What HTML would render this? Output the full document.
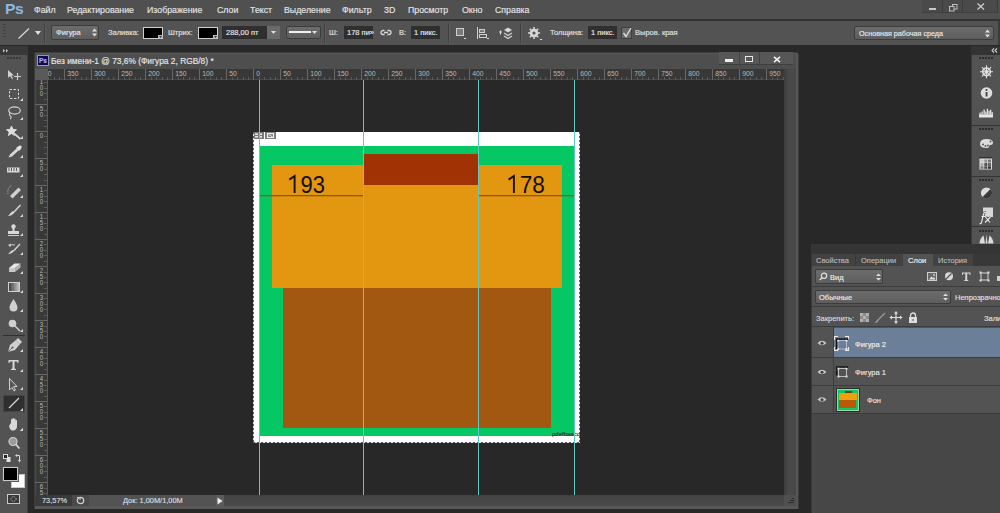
<!DOCTYPE html>
<html><head><meta charset="utf-8">
<style>
*{margin:0;padding:0;box-sizing:border-box}
html,body{width:1000px;height:513px;overflow:hidden;background:#282828;font-family:"Liberation Sans",sans-serif;position:relative}
.a{position:absolute}
svg.a{overflow:visible}
.t{position:absolute;white-space:nowrap;color:#dcdcdc;font-size:8.6px;line-height:10px;-webkit-text-stroke:0.15px currentColor}
.m{top:5px;color:#e4e4e4;font-size:8.8px}
.o{font-size:7.5px;line-height:9px;color:#e2e2e2}
.box{background:linear-gradient(#6c6c6c,#5e5e5e);border:1px solid #3c3c3c;border-radius:2px}
.sw{background:#000;border:1px solid #d0d0d0}
</style></head><body>
<!-- ===== MENU BAR ===== -->
<div class="a" style="left:0;top:0;width:1000px;height:20px;background:#505050"></div>
<div class="a" style="left:0;top:19px;width:1000px;height:2px;background:#323232"></div>
<div class="t" style="left:5px;top:1px;font-size:15.5px;line-height:16px;font-weight:bold;color:#94b6dc;letter-spacing:-0.3px;text-shadow:0 0 1px #24405e">Ps</div>
<div class="t m" style="left:34px">Файл</div>
<div class="t m" style="left:67px">Редактирование</div>
<div class="t m" style="left:147px">Изображение</div>
<div class="t m" style="left:217px">Слои</div>
<div class="t m" style="left:250px">Текст</div>
<div class="t m" style="left:284px">Выделение</div>
<div class="t m" style="left:342px">Фильтр</div>
<div class="t m" style="left:384px">3D</div>
<div class="t m" style="left:408px">Просмотр</div>
<div class="t m" style="left:462px">Окно</div>
<div class="t m" style="left:495px">Справка</div>
<!-- window buttons -->
<div class="a" style="left:922px;top:0;width:76px;height:13px;background:#4a4a4a;border-bottom:1px solid #404040"></div>
<div class="a" style="left:942px;top:0;width:1px;height:13px;background:#3c3c3c"></div>
<div class="a" style="left:962px;top:0;width:1px;height:13px;background:#3c3c3c"></div>
<div class="a" style="left:997px;top:0;width:1px;height:13px;background:#3c3c3c"></div>
<div class="a" style="left:929px;top:8px;width:7px;height:2px;background:#c8c8c8"></div>
<svg class="a" style="left:949px;top:4px" width="9" height="8"><rect x="3.5" y="0.5" width="4.5" height="4.5" fill="none" stroke="#c0c0c0"/><rect x="0.5" y="2.5" width="4.5" height="4.5" fill="#4a4a4a" stroke="#c0c0c0"/></svg>
<svg class="a" style="left:977px;top:3px" width="8" height="7"><path d="M0.5 0.5L7 6.5M7 0.5L0.5 6.5" stroke="#c8c8c8" stroke-width="1.4"/></svg>

<!-- ===== OPTIONS BAR ===== -->
<div class="a" style="left:0;top:21px;width:1000px;height:24px;background:#535353"></div>
<div class="a" style="left:998px;top:21px;width:2px;height:24px;background:#3c3c3c"></div>
<svg class="a" style="left:3px;top:24px" width="4" height="16"><g fill="#404040"><rect x="0" y="0" width="3" height="1"/><rect x="0" y="3" width="3" height="1"/><rect x="0" y="6" width="3" height="1"/><rect x="0" y="9" width="3" height="1"/><rect x="0" y="12" width="3" height="1"/></g></svg>
<svg class="a" style="left:17px;top:27px" width="14" height="13"><path d="M1.5 11.5L12 1.5" stroke="#d6d6d6" stroke-width="1.3"/></svg>
<svg class="a" style="left:35px;top:31px" width="7" height="5"><path d="M0 0H6L3 4z" fill="#e0e0e0"/></svg>
<div class="a" style="left:44px;top:23px;width:1px;height:20px;background:#404040"></div>
<div class="a" style="left:45px;top:23px;width:1px;height:20px;background:#5d5d5d"></div>
<div class="a box" style="left:51px;top:25px;width:48px;height:15px"></div>
<div class="t o" style="left:56px;top:28px;color:#e8e8e8">Фигура</div>
<svg class="a" style="left:92px;top:28px" width="6" height="9"><path d="M0 3.5L2.5 0.5L5 3.5zM0 5.5L2.5 8.5L5 5.5z" fill="#e0e0e0"/></svg>
<div class="t o" style="left:108px;top:28px">Заливка:</div>
<div class="a sw" style="left:143px;top:27px;width:20px;height:12px"></div>
<svg class="a" style="left:158px;top:35px" width="5" height="4"><path d="M0 0h5v4h-5z" fill="#bfbfbf"/><path d="M1 1h3l-1.5 2z" fill="#333"/></svg>
<div class="t o" style="left:168px;top:28px">Штрих:</div>
<div class="a sw" style="left:198px;top:27px;width:20px;height:12px"></div>
<svg class="a" style="left:213px;top:35px" width="5" height="4"><path d="M0 0h5v4h-5z" fill="#bfbfbf"/><path d="M1 1h3l-1.5 2z" fill="#333"/></svg>
<div class="a" style="left:222px;top:26px;width:45px;height:13px;background:#2f2f2f"></div>
<div class="t o" style="left:226px;top:28px;color:#e6e6e6">288,00 пт</div>
<div class="a" style="left:267px;top:26px;width:13px;height:13px;background:#6a6a6a"></div>
<svg class="a" style="left:271px;top:31px" width="6" height="4"><path d="M0 0H5L2.5 3z" fill="#e0e0e0"/></svg>
<div class="a box" style="left:286px;top:26px;width:35px;height:13px"></div>
<div class="a" style="left:289px;top:31px;width:22px;height:2px;background:#f0f0f0"></div>
<svg class="a" style="left:312px;top:31px" width="6" height="4"><path d="M0 0H5L2.5 3z" fill="#e0e0e0"/></svg>
<div class="a" style="left:324px;top:23px;width:1px;height:20px;background:#404040"></div>
<div class="a" style="left:325px;top:23px;width:1px;height:20px;background:#5d5d5d"></div>
<div class="t o" style="left:329px;top:28px">Ш:</div>
<div class="a" style="left:344px;top:26px;width:29px;height:13px;background:#2f2f2f"></div>
<div class="t o" style="left:347px;top:28px;color:#e6e6e6">178 пи»</div>
<svg class="a" style="left:380px;top:29px" width="12" height="7"><path d="M4.5 1.5H3A2 2 0 0 0 3 5.5H4.5M7.5 1.5H9A2 2 0 0 1 9 5.5H7.5M4 3.5H8" fill="none" stroke="#d8d8d8" stroke-width="1.3"/></svg>
<div class="t o" style="left:399px;top:28px">В:</div>
<div class="a" style="left:411px;top:26px;width:29px;height:13px;background:#2f2f2f"></div>
<div class="t o" style="left:414px;top:28px;color:#e6e6e6">1 пикс.</div>
<div class="a" style="left:448px;top:23px;width:1px;height:20px;background:#404040"></div>
<div class="a" style="left:449px;top:23px;width:1px;height:20px;background:#5d5d5d"></div>
<svg class="a" style="left:455px;top:27px" width="11" height="13"><rect x="1.5" y="1.5" width="7" height="7" fill="#7a7a7a" stroke="#cfcfcf"/><rect x="9" y="11" width="2" height="1" fill="#ddd"/></svg>
<svg class="a" style="left:476px;top:27px" width="13" height="13"><rect x="1" y="0" width="1" height="12" fill="#d0d0d0"/><rect x="3.5" y="2.5" width="5" height="3" fill="#777" stroke="#d0d0d0"/><rect x="3.5" y="7.5" width="7" height="3" fill="#555" stroke="#d0d0d0"/><rect x="11" y="11" width="2" height="1" fill="#ddd"/></svg>
<svg class="a" style="left:498px;top:26px" width="15" height="14"><path d="M1 6h3M2.5 4.5v4" stroke="#ddd" stroke-width="1"/><path d="M6 4L10 1.5L14 4L10 6.5z" fill="#d8d8d8"/><path d="M6 7L10 9.5L14 7M6 10L10 12.5L14 10" fill="none" stroke="#d0d0d0" stroke-width="1.3"/></svg>
<div class="a" style="left:520px;top:23px;width:1px;height:20px;background:#404040"></div>
<div class="a" style="left:521px;top:23px;width:1px;height:20px;background:#5d5d5d"></div>
<svg class="a" style="left:528px;top:27px" width="14" height="13"><circle cx="6" cy="6" r="4.3" fill="#d8d8d8"/><g stroke="#d8d8d8" stroke-width="1.6"><path d="M6 0v12M0 6h12M1.8 1.8l8.4 8.4M10.2 1.8l-8.4 8.4"/></g><circle cx="6" cy="6" r="1.6" fill="#555"/><rect x="12" y="12" width="2" height="1" fill="#ddd"/></svg>
<div class="t o" style="left:550px;top:28px">Толщина:</div>
<div class="a" style="left:588px;top:26px;width:29px;height:13px;background:#2f2f2f"></div>
<div class="t o" style="left:591px;top:28px;color:#e6e6e6">1 пикс.</div>
<div class="a" style="left:621px;top:27px;width:11px;height:12px;background:#6a6a6a;border:1px solid #3e3e3e"></div>
<svg class="a" style="left:621px;top:27px" width="11" height="12"><path d="M2.5 6L5 9.5L10 1" fill="none" stroke="#e0e0e0" stroke-width="1.3"/></svg>
<div class="t o" style="left:635px;top:28px">Выров. края</div>
<div class="a box" style="left:854px;top:26px;width:140px;height:14px"></div>
<div class="t o" style="left:859px;top:29px;color:#e8e8e8;font-size:7.2px">Основная рабочая среда</div>
<svg class="a" style="left:985px;top:29px" width="6" height="9"><path d="M0 3.5L2.5 0.5L5 3.5zM0 5.5L2.5 8.5L5 5.5z" fill="#e0e0e0"/></svg>
<!-- ===== LEFT TOOLS ===== -->
<div class="a" style="left:0;top:46px;width:28px;height:467px;background:#535353"></div>
<div class="a" style="left:27px;top:46px;width:1px;height:467px;background:#3e3e3e"></div>
<div class="a" style="left:0;top:46px;width:28px;height:9px;background:#383838"></div>
<svg class="a" style="left:3px;top:49px" width="7" height="4"><path d="M0 0L2 1.75L0 3.5zM3 0L5 1.75L3 3.5z" fill="#d0d0d0"/></svg>
<svg class="a" style="left:7px;top:57px" width="15" height="2"><g fill="#383838"><rect x="0" y="0" width="2" height="2"/><rect x="3" y="0" width="2" height="2"/><rect x="6" y="0" width="2" height="2"/><rect x="9" y="0" width="2" height="2"/><rect x="12" y="0" width="2" height="2"/></g></svg>
<svg class="a" style="left:0;top:60px" width="28" height="453" fill="#cfcfcf" stroke="none">
<!-- tiny triangles -->
<g fill="#d8d8d8">
<path d="M20 41h3v-3z"/><path d="M20 60h3v-3z"/><path d="M20 79h3v-3z"/><path d="M20 98h3v-3z"/><path d="M20 117h3v-3z"/><path d="M20 138h3v-3z"/><path d="M20 157h3v-3z"/><path d="M20 176h3v-3z"/><path d="M20 195h3v-3z"/><path d="M20 214h3v-3z"/><path d="M20 233h3v-3z"/><path d="M20 252h3v-3z"/><path d="M20 272h3v-3z"/><path d="M20 292h3v-3z"/><path d="M20 312h3v-3z"/><path d="M20 330h3v-3z"/><path d="M20 349h3v-3z"/><path d="M20 371h3v-3z"/>
</g>
<!-- move y70-80 -->
<path d="M8 10L8 18L10 16L12 19L13 18.5L11.5 15.5L14 15.5z" fill="#d0d0d0"/>
<path d="M17.5 13V20M14 16.5H21" stroke="#d0d0d0" stroke-width="1.2"/>
<!-- marquee -->
<rect x="9.5" y="29.5" width="9" height="9" fill="none" stroke="#d8d8d8" stroke-dasharray="2.5 1.5"/>
<!-- lasso -->
<ellipse cx="14.5" cy="50.5" rx="5.8" ry="3.6" fill="none" stroke="#d4d4d4" stroke-width="1.2"/>
<path d="M10 53Q8.5 55 10.5 56Q12 57.5 10 59" fill="none" stroke="#d4d4d4" stroke-width="1.1"/>
<!-- magic wand -->
<path d="M11.5 67L12.6 69.6L15.5 70L13.3 71.8L14 74.6L11.5 73L9 74.6L9.7 71.8L7.5 70L10.4 69.6z" fill="#e0e0e0" stroke="#d8d8d8" stroke-width="0.8" transform="translate(11.5 71) scale(1.25) translate(-11.5 -71)"/>
<path d="M13.5 73L20.5 79" stroke="#d0d0d0" stroke-width="1.8"/>
<!-- eyedropper -->
<path d="M8.5 97.5L10 94.5L16.5 88.5L18.5 90.5L12 96.5z" fill="#d8d8d8"/>
<path d="M16 88L19 85.8Q21 85 21.5 86.5Q22 88 20.5 89.5L18.8 91z" fill="#e4e4e4"/>
<!-- ruler -->
<rect x="7" y="107.5" width="12.5" height="5" fill="#d8d8d8"/>
<path d="M9 111v-3M11.5 111v-3M14 111v-3M16.5 111v-3" stroke="#555" stroke-width="0.9"/>
<!-- healing -->
<path d="M10 136L18.5 127.5L21 130L12.5 138.5z" fill="#d0d0d0"/>
<path d="M8 134Q7 128 12 125" fill="none" stroke="#b8b8b8" stroke-width="1" stroke-dasharray="1 1"/>
<!-- brush -->
<path d="M20.5 145L14 152" stroke="#d0d0d0" stroke-width="1.6"/>
<path d="M8 156Q11 156 13 154L14.5 152.5L13 151Q10.5 153 8 156z" fill="#e0e0e0"/>
<!-- stamp -->
<circle cx="13.5" cy="166.5" r="2.2" fill="#d8d8d8"/><rect x="12.5" y="167" width="2" height="4" fill="#d8d8d8"/>
<rect x="8" y="171" width="11" height="3" fill="#d8d8d8"/><rect x="8" y="175" width="11" height="1" fill="#cfcfcf"/>
<!-- history brush -->
<path d="M20 184L13.5 191" stroke="#d0d0d0" stroke-width="1.5"/>
<path d="M8 194Q11 194 13 192L14 191L12.5 190Q10 192 8 194z" fill="#e0e0e0"/>
<path d="M9 186Q11 184 15 185" fill="none" stroke="#d0d0d0" stroke-width="1"/><path d="M8 185L11 183.5L10.5 187z" fill="#d0d0d0"/>
<!-- eraser -->
<path d="M9 208L14.5 203.5H20.5L15 208z" fill="#e8e8e8"/><path d="M9 208H15V212H9z" fill="#c8c8c8"/><path d="M15 208L20.5 203.5V207.5L15 212z" fill="#b0b0b0"/>
<!-- gradient -->
<defs><linearGradient id="gr" x1="0" x2="1"><stop offset="0" stop-color="#3a3a3a"/><stop offset="1" stop-color="#c8c8c8"/></linearGradient></defs>
<rect x="8.5" y="222.5" width="11" height="9" fill="url(#gr)" stroke="#d0d0d0"/>
<!-- blur drop -->
<path d="M13.5 239Q17.5 245 17.5 247.5A4 4 0 0 1 9.5 247.5Q9.5 245 13.5 239z" fill="#d0d0d0"/>
<!-- dodge -->
<circle cx="12.5" cy="263.5" r="3.8" fill="#d0d0d0"/><path d="M15 266L20 271" stroke="#d0d0d0" stroke-width="1.5"/>
<!-- separator -->
<rect x="3" y="275" width="22" height="1" fill="#303030"/>
<!-- pen -->
<path d="M8 292L10 285L16 280L20 284L15 290z" fill="#d0d0d0"/><path d="M16 280L18 278L22 282L20 284z" fill="#d8d8d8"/><circle cx="12.5" cy="287.5" r="1" fill="#555"/><path d="M8 292L12 288" stroke="#555" stroke-width="0.8"/>
<!-- T -->
<path d="M8.5 300H18.5V303H17.5L17 301.5H14.5V308.5L16 309V310H11V309L12.5 308.5V301.5H10L9.5 303H8.5z" fill="#d8d8d8"/>
</svg>
<!-- selected tool bg -->
<div class="a" style="left:3px;top:395px;width:22px;height:17px;background:#2f2f2f;border:1px solid #454545"></div>
<svg class="a" style="left:0;top:360px" width="28" height="153">
<!-- path select -->
<path d="M9.5 18.5V30L12 27.5L14 31L15.5 30L13.5 26.5H17z" fill="#555" stroke="#d0d0d0" stroke-width="1"/>
<!-- line -->
<path d="M9 48L19 38" stroke="#d8d8d8" stroke-width="1.3"/>
<path d="M20 51h3v-3z" fill="#d8d8d8"/>
<!-- hand -->
<path d="M9 66L11 63V59.5A0.8 0.8 0 0 1 12.5 59.5V64V58.5A0.8 0.8 0 0 1 14 58.5V64V59A0.8 0.8 0 0 1 15.5 59V64.5V60.5A0.8 0.8 0 0 1 17 60.5V66Q17 69.5 14 70.5H12Q10 70 9 66z" fill="#d8d8d8"/>
<path d="M20 71h3v-3z" fill="#d8d8d8"/>
<!-- zoom -->
<circle cx="13" cy="81.5" r="4" fill="#9a9a9a" stroke="#d0d0d0" stroke-width="1.2"/><path d="M15.8 84.3L19.5 88.5" stroke="#d0d0d0" stroke-width="1.8"/>
<!-- default colors -->
<rect x="6.5" y="97" width="4" height="5" fill="#e0e0e0"/><rect x="3.5" y="94.5" width="4" height="4" fill="#222" stroke="#d8d8d8" stroke-width="1"/>
<path d="M16.5 95.5H19.5V100.5" fill="none" stroke="#d8d8d8" stroke-width="1"/><path d="M15 95.5L17 94V97z M18 100L21 100L19.5 102.5z" fill="#d8d8d8"/>
</svg>
<div class="a" style="left:11px;top:474px;width:14px;height:14px;background:#fff;border:1px solid #c8c8c8"></div>
<div class="a" style="left:3px;top:467px;width:15px;height:14px;background:#000;border:1px solid #c8c8c8;box-shadow:0 0 0 1px #5a5a5a"></div>
<div class="a" style="left:7px;top:494px;width:13px;height:10px;background:#3a3a3a;border:1px solid #c8c8c8"></div>
<svg class="a" style="left:10px;top:496px" width="8" height="6"><ellipse cx="3.5" cy="3" rx="2.6" ry="2.3" fill="none" stroke="#bdbdbd" stroke-dasharray="1 1"/></svg>
<!-- ===== DOCUMENT WINDOW ===== -->
<div class="a" style="left:34px;top:52px;width:765px;height:457px;background:#4e4e4e;border-radius:3px 3px 0 0;border:1px solid #3c3c3c"></div>
<div class="a" style="left:35px;top:53px;width:763px;height:16px;background:#4e4e4e;border-radius:2px 2px 0 0"></div>
<div class="a" style="left:35px;top:53px;width:763px;height:1px;background:#575757"></div>
<!-- ps icon -->
<div class="a" style="left:37px;top:55px;width:12px;height:11px;background:#0a0a55;border:1px solid #8b9ac8"></div>
<div class="t" style="left:39px;top:57px;font-size:6.5px;line-height:7px;color:#a8b4ff;font-weight:bold">Ps</div>
<div class="t" style="left:51px;top:56px;font-size:8.4px;color:#e6e6e6">Без имени-1 @ 73,6% (Фигура 2, RGB/8) *</div>
<!-- window buttons -->
<div class="a" style="left:719px;top:52px;width:74px;height:13px;background:#575757;border-bottom:1px solid #3e3e3e"></div>
<div class="a" style="left:739px;top:52px;width:1px;height:13px;background:#424242"></div>
<div class="a" style="left:759px;top:52px;width:1px;height:13px;background:#424242"></div>
<div class="a" style="left:725px;top:59px;width:8px;height:3px;background:#f0f0f0"></div>
<div class="a" style="left:745px;top:56px;width:8px;height:6px;border:1.5px solid #eaeaea"></div>
<svg class="a" style="left:773px;top:56px" width="8" height="7"><path d="M1 0.8L7 6.2M7 0.8L1 6.2" stroke="#f0f0f0" stroke-width="1.6"/></svg>
<div class="a" style="left:35px;top:69px;width:13px;height:11px;background:#5a5a5a"></div>
<!-- pasteboard -->
<div class="a" style="left:48px;top:80px;width:736px;height:415px;background:#282828"></div>
<!-- scrollbar -->
<div class="a" style="left:784px;top:69px;width:12px;height:426px;background:linear-gradient(90deg,#3c3c3c,#4a4a4a 40%,#474747)"></div>
<div class="a" style="left:796px;top:53px;width:2px;height:455px;background:#575757"></div>
<!-- status bar -->
<div class="a" style="left:35px;top:495px;width:762px;height:11px;background:#525252"></div>
<div class="a" style="left:35px;top:495px;width:37px;height:11px;background:#3b3b3b"></div>
<div class="t" style="left:42px;top:496px;font-size:7.4px;line-height:9px;color:#dcdcdc">73,57%</div>
<div class="a" style="left:72px;top:495px;width:17px;height:11px;background:#4a4a4a"></div>
<svg class="a" style="left:76px;top:496px" width="10" height="9"><circle cx="4.5" cy="4.5" r="3.2" fill="none" stroke="#cfcfcf" stroke-width="1.2"/><path d="M1 1.5L4 1.5L4 4" fill="none" stroke="#cfcfcf" stroke-width="1"/></svg>
<div class="a" style="left:89px;top:495px;width:127px;height:11px;background:#535353"></div>
<div class="t" style="left:123px;top:496px;font-size:7.4px;line-height:9px;color:#dedede">Док: 1,00M/1,00M</div>
<div class="a" style="left:216px;top:495px;width:8px;height:11px;background:#5c5c5c"></div>
<svg class="a" style="left:217px;top:497px" width="6" height="8"><path d="M0.5 0.5L5.5 4L0.5 7.5z" fill="#f0f0f0"/></svg>
<div class="a" style="left:224px;top:495px;width:560px;height:11px;background:linear-gradient(#434343,#4a4a4a)"></div>
<div class="a" style="left:784px;top:495px;width:12px;height:11px;background:#505050"></div><svg class="a" style="left:786px;top:497px" width="9" height="8"><g fill="#2c2c2c"><rect x="6" y="1" width="2" height="1"/><rect x="4" y="3" width="4" height="1"/><rect x="2" y="5" width="6" height="1"/></g></svg>
<div class="a" style="left:35px;top:506px;width:763px;height:3px;background:#585858"></div>
<svg class="a" style="left:48px;top:69px;overflow:hidden" width="736" height="11">
<rect x="0" y="0" width="736" height="11" fill="#383838"/>
<rect x="0" y="10.5" width="736" height="1" fill="#5a5a5a"/>
<rect x="0" y="8" width="1" height="3" fill="#5c5c5c"/>
<rect x="6" y="8" width="1" height="3" fill="#5c5c5c"/>
<rect x="11" y="8" width="1" height="3" fill="#5c5c5c"/>
<rect x="16" y="0" width="1" height="11" fill="#686868"/>
<rect x="22" y="8" width="1" height="3" fill="#5c5c5c"/>
<rect x="27" y="8" width="1" height="3" fill="#5c5c5c"/>
<rect x="33" y="8" width="1" height="3" fill="#5c5c5c"/>
<rect x="38" y="8" width="1" height="3" fill="#5c5c5c"/>
<rect x="43" y="0" width="1" height="11" fill="#686868"/>
<rect x="49" y="8" width="1" height="3" fill="#5c5c5c"/>
<rect x="54" y="8" width="1" height="3" fill="#5c5c5c"/>
<rect x="60" y="8" width="1" height="3" fill="#5c5c5c"/>
<rect x="65" y="8" width="1" height="3" fill="#5c5c5c"/>
<rect x="70" y="0" width="1" height="11" fill="#686868"/>
<rect x="76" y="8" width="1" height="3" fill="#5c5c5c"/>
<rect x="81" y="8" width="1" height="3" fill="#5c5c5c"/>
<rect x="87" y="8" width="1" height="3" fill="#5c5c5c"/>
<rect x="92" y="8" width="1" height="3" fill="#5c5c5c"/>
<rect x="97" y="0" width="1" height="11" fill="#686868"/>
<rect x="103" y="8" width="1" height="3" fill="#5c5c5c"/>
<rect x="108" y="8" width="1" height="3" fill="#5c5c5c"/>
<rect x="114" y="8" width="1" height="3" fill="#5c5c5c"/>
<rect x="119" y="8" width="1" height="3" fill="#5c5c5c"/>
<rect x="124" y="0" width="1" height="11" fill="#686868"/>
<rect x="130" y="8" width="1" height="3" fill="#5c5c5c"/>
<rect x="135" y="8" width="1" height="3" fill="#5c5c5c"/>
<rect x="141" y="8" width="1" height="3" fill="#5c5c5c"/>
<rect x="146" y="8" width="1" height="3" fill="#5c5c5c"/>
<rect x="151" y="0" width="1" height="11" fill="#686868"/>
<rect x="157" y="8" width="1" height="3" fill="#5c5c5c"/>
<rect x="162" y="8" width="1" height="3" fill="#5c5c5c"/>
<rect x="168" y="8" width="1" height="3" fill="#5c5c5c"/>
<rect x="173" y="8" width="1" height="3" fill="#5c5c5c"/>
<rect x="178" y="0" width="1" height="11" fill="#686868"/>
<rect x="184" y="8" width="1" height="3" fill="#5c5c5c"/>
<rect x="189" y="8" width="1" height="3" fill="#5c5c5c"/>
<rect x="195" y="8" width="1" height="3" fill="#5c5c5c"/>
<rect x="200" y="8" width="1" height="3" fill="#5c5c5c"/>
<rect x="205" y="0" width="1" height="11" fill="#686868"/>
<rect x="211" y="8" width="1" height="3" fill="#5c5c5c"/>
<rect x="216" y="8" width="1" height="3" fill="#5c5c5c"/>
<rect x="222" y="8" width="1" height="3" fill="#5c5c5c"/>
<rect x="227" y="8" width="1" height="3" fill="#5c5c5c"/>
<rect x="232" y="0" width="1" height="11" fill="#686868"/>
<rect x="238" y="8" width="1" height="3" fill="#5c5c5c"/>
<rect x="243" y="8" width="1" height="3" fill="#5c5c5c"/>
<rect x="249" y="8" width="1" height="3" fill="#5c5c5c"/>
<rect x="254" y="8" width="1" height="3" fill="#5c5c5c"/>
<rect x="259" y="0" width="1" height="11" fill="#686868"/>
<rect x="265" y="8" width="1" height="3" fill="#5c5c5c"/>
<rect x="270" y="8" width="1" height="3" fill="#5c5c5c"/>
<rect x="276" y="8" width="1" height="3" fill="#5c5c5c"/>
<rect x="281" y="8" width="1" height="3" fill="#5c5c5c"/>
<rect x="286" y="0" width="1" height="11" fill="#686868"/>
<rect x="292" y="8" width="1" height="3" fill="#5c5c5c"/>
<rect x="297" y="8" width="1" height="3" fill="#5c5c5c"/>
<rect x="303" y="8" width="1" height="3" fill="#5c5c5c"/>
<rect x="308" y="8" width="1" height="3" fill="#5c5c5c"/>
<rect x="313" y="0" width="1" height="11" fill="#686868"/>
<rect x="319" y="8" width="1" height="3" fill="#5c5c5c"/>
<rect x="324" y="8" width="1" height="3" fill="#5c5c5c"/>
<rect x="330" y="8" width="1" height="3" fill="#5c5c5c"/>
<rect x="335" y="8" width="1" height="3" fill="#5c5c5c"/>
<rect x="340" y="0" width="1" height="11" fill="#686868"/>
<rect x="346" y="8" width="1" height="3" fill="#5c5c5c"/>
<rect x="351" y="8" width="1" height="3" fill="#5c5c5c"/>
<rect x="357" y="8" width="1" height="3" fill="#5c5c5c"/>
<rect x="362" y="8" width="1" height="3" fill="#5c5c5c"/>
<rect x="367" y="0" width="1" height="11" fill="#686868"/>
<rect x="373" y="8" width="1" height="3" fill="#5c5c5c"/>
<rect x="378" y="8" width="1" height="3" fill="#5c5c5c"/>
<rect x="384" y="8" width="1" height="3" fill="#5c5c5c"/>
<rect x="389" y="8" width="1" height="3" fill="#5c5c5c"/>
<rect x="394" y="0" width="1" height="11" fill="#686868"/>
<rect x="400" y="8" width="1" height="3" fill="#5c5c5c"/>
<rect x="405" y="8" width="1" height="3" fill="#5c5c5c"/>
<rect x="411" y="8" width="1" height="3" fill="#5c5c5c"/>
<rect x="416" y="8" width="1" height="3" fill="#5c5c5c"/>
<rect x="421" y="0" width="1" height="11" fill="#686868"/>
<rect x="427" y="8" width="1" height="3" fill="#5c5c5c"/>
<rect x="432" y="8" width="1" height="3" fill="#5c5c5c"/>
<rect x="438" y="8" width="1" height="3" fill="#5c5c5c"/>
<rect x="443" y="8" width="1" height="3" fill="#5c5c5c"/>
<rect x="448" y="0" width="1" height="11" fill="#686868"/>
<rect x="454" y="8" width="1" height="3" fill="#5c5c5c"/>
<rect x="459" y="8" width="1" height="3" fill="#5c5c5c"/>
<rect x="465" y="8" width="1" height="3" fill="#5c5c5c"/>
<rect x="470" y="8" width="1" height="3" fill="#5c5c5c"/>
<rect x="475" y="0" width="1" height="11" fill="#686868"/>
<rect x="481" y="8" width="1" height="3" fill="#5c5c5c"/>
<rect x="486" y="8" width="1" height="3" fill="#5c5c5c"/>
<rect x="492" y="8" width="1" height="3" fill="#5c5c5c"/>
<rect x="497" y="8" width="1" height="3" fill="#5c5c5c"/>
<rect x="502" y="0" width="1" height="11" fill="#686868"/>
<rect x="508" y="8" width="1" height="3" fill="#5c5c5c"/>
<rect x="513" y="8" width="1" height="3" fill="#5c5c5c"/>
<rect x="519" y="8" width="1" height="3" fill="#5c5c5c"/>
<rect x="524" y="8" width="1" height="3" fill="#5c5c5c"/>
<rect x="529" y="0" width="1" height="11" fill="#686868"/>
<rect x="535" y="8" width="1" height="3" fill="#5c5c5c"/>
<rect x="540" y="8" width="1" height="3" fill="#5c5c5c"/>
<rect x="546" y="8" width="1" height="3" fill="#5c5c5c"/>
<rect x="551" y="8" width="1" height="3" fill="#5c5c5c"/>
<rect x="556" y="0" width="1" height="11" fill="#686868"/>
<rect x="562" y="8" width="1" height="3" fill="#5c5c5c"/>
<rect x="567" y="8" width="1" height="3" fill="#5c5c5c"/>
<rect x="573" y="8" width="1" height="3" fill="#5c5c5c"/>
<rect x="578" y="8" width="1" height="3" fill="#5c5c5c"/>
<rect x="583" y="0" width="1" height="11" fill="#686868"/>
<rect x="589" y="8" width="1" height="3" fill="#5c5c5c"/>
<rect x="594" y="8" width="1" height="3" fill="#5c5c5c"/>
<rect x="600" y="8" width="1" height="3" fill="#5c5c5c"/>
<rect x="605" y="8" width="1" height="3" fill="#5c5c5c"/>
<rect x="610" y="0" width="1" height="11" fill="#686868"/>
<rect x="616" y="8" width="1" height="3" fill="#5c5c5c"/>
<rect x="621" y="8" width="1" height="3" fill="#5c5c5c"/>
<rect x="627" y="8" width="1" height="3" fill="#5c5c5c"/>
<rect x="632" y="8" width="1" height="3" fill="#5c5c5c"/>
<rect x="637" y="0" width="1" height="11" fill="#686868"/>
<rect x="643" y="8" width="1" height="3" fill="#5c5c5c"/>
<rect x="648" y="8" width="1" height="3" fill="#5c5c5c"/>
<rect x="654" y="8" width="1" height="3" fill="#5c5c5c"/>
<rect x="659" y="8" width="1" height="3" fill="#5c5c5c"/>
<rect x="664" y="0" width="1" height="11" fill="#686868"/>
<rect x="670" y="8" width="1" height="3" fill="#5c5c5c"/>
<rect x="675" y="8" width="1" height="3" fill="#5c5c5c"/>
<rect x="681" y="8" width="1" height="3" fill="#5c5c5c"/>
<rect x="686" y="8" width="1" height="3" fill="#5c5c5c"/>
<rect x="691" y="0" width="1" height="11" fill="#686868"/>
<rect x="697" y="8" width="1" height="3" fill="#5c5c5c"/>
<rect x="702" y="8" width="1" height="3" fill="#5c5c5c"/>
<rect x="708" y="8" width="1" height="3" fill="#5c5c5c"/>
<rect x="713" y="8" width="1" height="3" fill="#5c5c5c"/>
<rect x="718" y="0" width="1" height="11" fill="#686868"/>
<rect x="724" y="8" width="1" height="3" fill="#5c5c5c"/>
<rect x="729" y="8" width="1" height="3" fill="#5c5c5c"/>
<rect x="735" y="8" width="1" height="3" fill="#5c5c5c"/>
<g font-family="Liberation Sans" font-size="8" fill="#b8b8b8"><text x="-7.8" y="6.8" textLength="11.25" lengthAdjust="spacingAndGlyphs">400</text><text x="19.2" y="6.8" textLength="11.25" lengthAdjust="spacingAndGlyphs">350</text><text x="46.2" y="6.8" textLength="11.25" lengthAdjust="spacingAndGlyphs">300</text><text x="73.2" y="6.8" textLength="11.25" lengthAdjust="spacingAndGlyphs">250</text><text x="100.2" y="6.8" textLength="11.25" lengthAdjust="spacingAndGlyphs">200</text><text x="127.2" y="6.8" textLength="11.25" lengthAdjust="spacingAndGlyphs">150</text><text x="154.2" y="6.8" textLength="11.25" lengthAdjust="spacingAndGlyphs">100</text><text x="181.2" y="6.8" textLength="7.50" lengthAdjust="spacingAndGlyphs">50</text><text x="208.2" y="6.8" textLength="3.75" lengthAdjust="spacingAndGlyphs">0</text><text x="235.2" y="6.8" textLength="7.50" lengthAdjust="spacingAndGlyphs">50</text><text x="262.2" y="6.8" textLength="11.25" lengthAdjust="spacingAndGlyphs">100</text><text x="289.2" y="6.8" textLength="11.25" lengthAdjust="spacingAndGlyphs">150</text><text x="316.2" y="6.8" textLength="11.25" lengthAdjust="spacingAndGlyphs">200</text><text x="343.2" y="6.8" textLength="11.25" lengthAdjust="spacingAndGlyphs">250</text><text x="370.2" y="6.8" textLength="11.25" lengthAdjust="spacingAndGlyphs">300</text><text x="397.2" y="6.8" textLength="11.25" lengthAdjust="spacingAndGlyphs">350</text><text x="424.2" y="6.8" textLength="11.25" lengthAdjust="spacingAndGlyphs">400</text><text x="451.2" y="6.8" textLength="11.25" lengthAdjust="spacingAndGlyphs">450</text><text x="478.2" y="6.8" textLength="11.25" lengthAdjust="spacingAndGlyphs">500</text><text x="505.2" y="6.8" textLength="11.25" lengthAdjust="spacingAndGlyphs">550</text><text x="532.2" y="6.8" textLength="11.25" lengthAdjust="spacingAndGlyphs">600</text><text x="559.2" y="6.8" textLength="11.25" lengthAdjust="spacingAndGlyphs">650</text><text x="586.2" y="6.8" textLength="11.25" lengthAdjust="spacingAndGlyphs">700</text><text x="613.2" y="6.8" textLength="11.25" lengthAdjust="spacingAndGlyphs">750</text><text x="640.2" y="6.8" textLength="11.25" lengthAdjust="spacingAndGlyphs">800</text><text x="667.2" y="6.8" textLength="11.25" lengthAdjust="spacingAndGlyphs">850</text><text x="694.2" y="6.8" textLength="11.25" lengthAdjust="spacingAndGlyphs">900</text><text x="721.2" y="6.8" textLength="11.25" lengthAdjust="spacingAndGlyphs">950</text></g>
</svg>
<svg class="a" style="left:35px;top:80px;overflow:hidden" width="13" height="415">
<rect x="0" y="0" width="13" height="415" fill="#383838"/>
<rect x="12" y="0" width="1" height="415" fill="#5a5a5a"/>
<rect x="0" y="0" width="1.5" height="415" fill="#474747"/>
<rect x="9" y="2" width="3" height="1" fill="#5c5c5c"/>
<rect x="9" y="8" width="3" height="1" fill="#5c5c5c"/>
<rect x="9" y="13" width="3" height="1" fill="#5c5c5c"/>
<rect x="9" y="19" width="3" height="1" fill="#5c5c5c"/>
<rect x="0" y="24" width="12" height="1" fill="#686868"/>
<rect x="9" y="30" width="3" height="1" fill="#5c5c5c"/>
<rect x="9" y="35" width="3" height="1" fill="#5c5c5c"/>
<rect x="9" y="40" width="3" height="1" fill="#5c5c5c"/>
<rect x="9" y="46" width="3" height="1" fill="#5c5c5c"/>
<rect x="0" y="51" width="12" height="1" fill="#686868"/>
<rect x="9" y="56" width="3" height="1" fill="#5c5c5c"/>
<rect x="9" y="62" width="3" height="1" fill="#5c5c5c"/>
<rect x="9" y="67" width="3" height="1" fill="#5c5c5c"/>
<rect x="9" y="73" width="3" height="1" fill="#5c5c5c"/>
<rect x="0" y="78" width="12" height="1" fill="#686868"/>
<rect x="9" y="84" width="3" height="1" fill="#5c5c5c"/>
<rect x="9" y="89" width="3" height="1" fill="#5c5c5c"/>
<rect x="9" y="94" width="3" height="1" fill="#5c5c5c"/>
<rect x="9" y="100" width="3" height="1" fill="#5c5c5c"/>
<rect x="0" y="105" width="12" height="1" fill="#686868"/>
<rect x="9" y="110" width="3" height="1" fill="#5c5c5c"/>
<rect x="9" y="116" width="3" height="1" fill="#5c5c5c"/>
<rect x="9" y="121" width="3" height="1" fill="#5c5c5c"/>
<rect x="9" y="127" width="3" height="1" fill="#5c5c5c"/>
<rect x="0" y="132" width="12" height="1" fill="#686868"/>
<rect x="9" y="138" width="3" height="1" fill="#5c5c5c"/>
<rect x="9" y="143" width="3" height="1" fill="#5c5c5c"/>
<rect x="9" y="148" width="3" height="1" fill="#5c5c5c"/>
<rect x="9" y="154" width="3" height="1" fill="#5c5c5c"/>
<rect x="0" y="159" width="12" height="1" fill="#686868"/>
<rect x="9" y="164" width="3" height="1" fill="#5c5c5c"/>
<rect x="9" y="170" width="3" height="1" fill="#5c5c5c"/>
<rect x="9" y="175" width="3" height="1" fill="#5c5c5c"/>
<rect x="9" y="181" width="3" height="1" fill="#5c5c5c"/>
<rect x="0" y="186" width="12" height="1" fill="#686868"/>
<rect x="9" y="192" width="3" height="1" fill="#5c5c5c"/>
<rect x="9" y="197" width="3" height="1" fill="#5c5c5c"/>
<rect x="9" y="202" width="3" height="1" fill="#5c5c5c"/>
<rect x="9" y="208" width="3" height="1" fill="#5c5c5c"/>
<rect x="0" y="213" width="12" height="1" fill="#686868"/>
<rect x="9" y="218" width="3" height="1" fill="#5c5c5c"/>
<rect x="9" y="224" width="3" height="1" fill="#5c5c5c"/>
<rect x="9" y="229" width="3" height="1" fill="#5c5c5c"/>
<rect x="9" y="235" width="3" height="1" fill="#5c5c5c"/>
<rect x="0" y="240" width="12" height="1" fill="#686868"/>
<rect x="9" y="246" width="3" height="1" fill="#5c5c5c"/>
<rect x="9" y="251" width="3" height="1" fill="#5c5c5c"/>
<rect x="9" y="256" width="3" height="1" fill="#5c5c5c"/>
<rect x="9" y="262" width="3" height="1" fill="#5c5c5c"/>
<rect x="0" y="267" width="12" height="1" fill="#686868"/>
<rect x="9" y="272" width="3" height="1" fill="#5c5c5c"/>
<rect x="9" y="278" width="3" height="1" fill="#5c5c5c"/>
<rect x="9" y="283" width="3" height="1" fill="#5c5c5c"/>
<rect x="9" y="289" width="3" height="1" fill="#5c5c5c"/>
<rect x="0" y="294" width="12" height="1" fill="#686868"/>
<rect x="9" y="300" width="3" height="1" fill="#5c5c5c"/>
<rect x="9" y="305" width="3" height="1" fill="#5c5c5c"/>
<rect x="9" y="310" width="3" height="1" fill="#5c5c5c"/>
<rect x="9" y="316" width="3" height="1" fill="#5c5c5c"/>
<rect x="0" y="321" width="12" height="1" fill="#686868"/>
<rect x="9" y="326" width="3" height="1" fill="#5c5c5c"/>
<rect x="9" y="332" width="3" height="1" fill="#5c5c5c"/>
<rect x="9" y="337" width="3" height="1" fill="#5c5c5c"/>
<rect x="9" y="343" width="3" height="1" fill="#5c5c5c"/>
<rect x="0" y="348" width="12" height="1" fill="#686868"/>
<rect x="9" y="354" width="3" height="1" fill="#5c5c5c"/>
<rect x="9" y="359" width="3" height="1" fill="#5c5c5c"/>
<rect x="9" y="364" width="3" height="1" fill="#5c5c5c"/>
<rect x="9" y="370" width="3" height="1" fill="#5c5c5c"/>
<rect x="0" y="375" width="12" height="1" fill="#686868"/>
<rect x="9" y="380" width="3" height="1" fill="#5c5c5c"/>
<rect x="9" y="386" width="3" height="1" fill="#5c5c5c"/>
<rect x="9" y="391" width="3" height="1" fill="#5c5c5c"/>
<rect x="9" y="397" width="3" height="1" fill="#5c5c5c"/>
<rect x="0" y="402" width="12" height="1" fill="#686868"/>
<rect x="9" y="408" width="3" height="1" fill="#5c5c5c"/>
<rect x="9" y="413" width="3" height="1" fill="#5c5c5c"/>
<g font-family="Liberation Sans" font-size="6.4" fill="#b8b8b8"><text x="4.8" y="3.7" textLength="3.4" lengthAdjust="spacingAndGlyphs">1</text><text x="4.8" y="10.0" textLength="3.4" lengthAdjust="spacingAndGlyphs">0</text><text x="4.8" y="16.4" textLength="3.4" lengthAdjust="spacingAndGlyphs">0</text><text x="4.8" y="30.7" textLength="3.4" lengthAdjust="spacingAndGlyphs">5</text><text x="4.8" y="37.0" textLength="3.4" lengthAdjust="spacingAndGlyphs">0</text><text x="4.8" y="57.7" textLength="3.4" lengthAdjust="spacingAndGlyphs">0</text><text x="4.8" y="84.7" textLength="3.4" lengthAdjust="spacingAndGlyphs">5</text><text x="4.8" y="91.0" textLength="3.4" lengthAdjust="spacingAndGlyphs">0</text><text x="4.8" y="111.7" textLength="3.4" lengthAdjust="spacingAndGlyphs">1</text><text x="4.8" y="118.0" textLength="3.4" lengthAdjust="spacingAndGlyphs">0</text><text x="4.8" y="124.4" textLength="3.4" lengthAdjust="spacingAndGlyphs">0</text><text x="4.8" y="138.7" textLength="3.4" lengthAdjust="spacingAndGlyphs">1</text><text x="4.8" y="145.0" textLength="3.4" lengthAdjust="spacingAndGlyphs">5</text><text x="4.8" y="151.4" textLength="3.4" lengthAdjust="spacingAndGlyphs">0</text><text x="4.8" y="165.7" textLength="3.4" lengthAdjust="spacingAndGlyphs">2</text><text x="4.8" y="172.0" textLength="3.4" lengthAdjust="spacingAndGlyphs">0</text><text x="4.8" y="178.4" textLength="3.4" lengthAdjust="spacingAndGlyphs">0</text><text x="4.8" y="192.7" textLength="3.4" lengthAdjust="spacingAndGlyphs">2</text><text x="4.8" y="199.1" textLength="3.4" lengthAdjust="spacingAndGlyphs">5</text><text x="4.8" y="205.4" textLength="3.4" lengthAdjust="spacingAndGlyphs">0</text><text x="4.8" y="219.7" textLength="3.4" lengthAdjust="spacingAndGlyphs">3</text><text x="4.8" y="226.1" textLength="3.4" lengthAdjust="spacingAndGlyphs">0</text><text x="4.8" y="232.4" textLength="3.4" lengthAdjust="spacingAndGlyphs">0</text><text x="4.8" y="246.7" textLength="3.4" lengthAdjust="spacingAndGlyphs">3</text><text x="4.8" y="253.1" textLength="3.4" lengthAdjust="spacingAndGlyphs">5</text><text x="4.8" y="259.4" textLength="3.4" lengthAdjust="spacingAndGlyphs">0</text><text x="4.8" y="273.7" textLength="3.4" lengthAdjust="spacingAndGlyphs">4</text><text x="4.8" y="280.1" textLength="3.4" lengthAdjust="spacingAndGlyphs">0</text><text x="4.8" y="286.4" textLength="3.4" lengthAdjust="spacingAndGlyphs">0</text><text x="4.8" y="300.7" textLength="3.4" lengthAdjust="spacingAndGlyphs">4</text><text x="4.8" y="307.1" textLength="3.4" lengthAdjust="spacingAndGlyphs">5</text><text x="4.8" y="313.4" textLength="3.4" lengthAdjust="spacingAndGlyphs">0</text><text x="4.8" y="327.7" textLength="3.4" lengthAdjust="spacingAndGlyphs">5</text><text x="4.8" y="334.1" textLength="3.4" lengthAdjust="spacingAndGlyphs">0</text><text x="4.8" y="340.4" textLength="3.4" lengthAdjust="spacingAndGlyphs">0</text><text x="4.8" y="354.7" textLength="3.4" lengthAdjust="spacingAndGlyphs">5</text><text x="4.8" y="361.1" textLength="3.4" lengthAdjust="spacingAndGlyphs">5</text><text x="4.8" y="367.4" textLength="3.4" lengthAdjust="spacingAndGlyphs">0</text><text x="4.8" y="381.7" textLength="3.4" lengthAdjust="spacingAndGlyphs">6</text><text x="4.8" y="388.1" textLength="3.4" lengthAdjust="spacingAndGlyphs">0</text><text x="4.8" y="394.4" textLength="3.4" lengthAdjust="spacingAndGlyphs">0</text><text x="4.8" y="408.7" textLength="3.4" lengthAdjust="spacingAndGlyphs">6</text><text x="4.8" y="415.1" textLength="3.4" lengthAdjust="spacingAndGlyphs">5</text></g>
</svg><!-- canvas -->
<div class="a" style="left:253px;top:132px;width:327px;height:311px;background:#fff"></div>
<div class="a" style="left:260px;top:146px;width:314px;height:290px;background:#05c864"></div>
<div class="a" style="left:272px;top:165px;width:290px;height:123px;background:#e3960f"></div>
<div class="a" style="left:364px;top:154px;width:114px;height:31px;background:#a03203"></div>
<div class="a" style="left:283px;top:288px;width:268px;height:140px;background:#a25810"></div>
<svg class="a" style="left:0;top:0" width="1000" height="513">
<g fill="#141008" font-family="Liberation Sans" font-size="24.2">
<path d="M289.3 179.6L294.6 176V193" fill="none" stroke="#141008" stroke-width="1.9"/>
<text x="300.6" y="193" textLength="24.4" lengthAdjust="spacingAndGlyphs">93</text>
<path d="M508.6 179.6L513.9 176V193" fill="none" stroke="#141008" stroke-width="1.9"/>
<text x="519.7" y="193" textLength="25.2" lengthAdjust="spacingAndGlyphs">78</text>
</g>
<rect x="260" y="195" width="103" height="1.3" fill="#8a5a12"/>
<rect x="479" y="195" width="95" height="1.3" fill="#8a5a12"/>
</svg>
<!-- small icons top-left of canvas -->
<svg class="a" style="left:253px;top:132px" width="24" height="8">
<rect x="0" y="0" width="11" height="7" fill="#7a7a7a"/><rect x="12" y="0" width="11" height="7" fill="#7a7a7a"/>
<path d="M2 1.5H5V3H2zM6 1.5H9V3H6zM2 4H5V5.5H2zM6 4H9V5.5H6z" fill="#e8e8e8"/>
<rect x="14.5" y="1.5" width="6" height="4" fill="none" stroke="#f0f0f0" stroke-width="1.1"/><path d="M15.5 2.5L19.5 4.8" stroke="#f0f0f0" stroke-width="0.9"/>
</svg>
<div class="a" style="left:253px;top:132px;width:1px;height:311px;background:repeating-linear-gradient(#5a5a6a 0 2px,#e8e8ee 2px 4px)"></div>
<div class="a" style="left:579px;top:132px;width:1px;height:311px;background:repeating-linear-gradient(#5a5a6a 0 2px,#e8e8ee 2px 4px)"></div>
<div class="a" style="left:253px;top:442px;width:327px;height:1px;background:repeating-linear-gradient(90deg,#5a5a6a 0 2px,#e8e8ee 2px 4px)"></div>
<div class="t" style="left:552px;top:431px;font-size:6px;line-height:7px;color:#333">pdefbaaco</div>
<!-- guides -->
<div class="a" style="left:259px;top:80px;width:1px;height:415px;background:#64c8c0"></div>
<div class="a" style="left:363px;top:80px;width:1px;height:415px;background:#64c8c0"></div>
<div class="a" style="left:478px;top:80px;width:1px;height:415px;background:#64c8c0"></div>
<div class="a" style="left:574px;top:80px;width:1px;height:415px;background:#64c8c0"></div>
<!-- ===== RIGHT DOCK ===== -->
<div class="a" style="left:971px;top:46px;width:29px;height:198px;background:#535353;border-left:1px solid #3a3a3a"></div>
<div class="a" style="left:971px;top:46px;width:29px;height:9px;background:#333"></div>
<svg class="a" style="left:991px;top:48px" width="7" height="5"><path d="M3 0.5L1 2.5L3 4.5M6 0.5L4 2.5L6 4.5" fill="none" stroke="#d0d0d0" stroke-width="1.1"/></svg>
<div class="a" style="left:972px;top:125px;width:28px;height:1px;background:#333"></div>
<div class="a" style="left:972px;top:176px;width:28px;height:1px;background:#333"></div>
<div class="a" style="left:972px;top:226px;width:28px;height:1px;background:#333"></div>
<svg class="a" style="left:971px;top:46px" width="29" height="198">
<g fill="#2c2c2c"><rect x="8" y="11" width="2" height="2"/><rect x="11" y="11" width="2" height="2"/><rect x="14" y="11" width="2" height="2"/><rect x="17" y="11" width="2" height="2"/><rect x="20" y="11" width="2" height="2"/>
<rect x="8" y="82" width="2" height="2"/><rect x="11" y="82" width="2" height="2"/><rect x="14" y="82" width="2" height="2"/><rect x="17" y="82" width="2" height="2"/><rect x="20" y="82" width="2" height="2"/>
<rect x="8" y="133" width="2" height="2"/><rect x="11" y="133" width="2" height="2"/><rect x="14" y="133" width="2" height="2"/><rect x="17" y="133" width="2" height="2"/><rect x="20" y="133" width="2" height="2"/>
<rect x="8" y="184" width="2" height="2"/><rect x="11" y="184" width="2" height="2"/><rect x="14" y="184" width="2" height="2"/><rect x="17" y="184" width="2" height="2"/><rect x="20" y="184" width="2" height="2"/></g>
<!-- navigator -->
<g transform="translate(15.5 25.8)"><circle r="3.8" fill="none" stroke="#e0e0e0" stroke-width="1.6"/><path d="M0 -6.5V6.5M-6.5 0H6.5M-4.6 -4.6L4.6 4.6M4.6 -4.6L-4.6 4.6" stroke="#e0e0e0" stroke-width="1.1"/><circle r="1.3" fill="#e0e0e0"/></g>
<!-- info -->
<circle cx="15.5" cy="47" r="5.8" fill="#dedede"/><rect x="14.6" y="46" width="1.9" height="4.5" fill="#444"/><circle cx="15.5" cy="44" r="1.1" fill="#444"/>
<!-- histogram -->
<path d="M8 71.5V68.5H22V71.5z" fill="#e6e6e6"/>
<g fill="#e6e6e6"><rect x="8.5" y="66.5" width="1.2" height="3"/><rect x="10.5" y="65.5" width="1.2" height="4"/><rect x="12.5" y="63.5" width="1.3" height="5"/><rect x="14.3" y="65.5" width="1.2" height="4"/><rect x="15.8" y="62.8" width="1.3" height="6"/><rect x="17.5" y="64.8" width="1.2" height="4"/><rect x="19" y="63.8" width="1.3" height="5"/><rect x="20.6" y="66" width="1.2" height="3"/></g>
<!-- palette -->
<path d="M9 98Q9 93 15.5 93Q22 93 22 97Q22 99 19.5 99Q18 99 18 100.5Q18 102 15.5 102Q9 102 9 98z" fill="#dcdcdc"/>
<circle cx="12" cy="98.5" r="1" fill="#555"/><circle cx="14.5" cy="100" r="1" fill="#555"/><circle cx="17" cy="99.5" r="0.9" fill="#555"/><circle cx="19.5" cy="95.5" r="0.9" fill="#555"/>
<!-- swatches -->
<rect x="8.5" y="111" width="12.5" height="1.5" fill="#303030"/>
<rect x="8.5" y="112.5" width="12.5" height="11" fill="#e0e0e0"/>
<g><rect x="9.5" y="113.5" width="3" height="3" fill="#c8c8c8"/><rect x="13.3" y="113.5" width="3" height="3" fill="#909090"/><rect x="17" y="113.5" width="3" height="3" fill="#777"/>
<rect x="9.5" y="117" width="3" height="3" fill="#aaa"/><rect x="13.3" y="117" width="3" height="3" fill="#555"/><rect x="17" y="117" width="3" height="3" fill="#666"/>
<rect x="9.5" y="120.3" width="3" height="2.5" fill="#777"/><rect x="13.3" y="120.3" width="3" height="2.5" fill="#444"/><rect x="17" y="120.3" width="3" height="2.5" fill="#333"/></g>
<!-- adjustments -->
<circle cx="15.5" cy="147" r="5.6" fill="#dcdcdc"/><path d="M19.5 143A5.6 5.6 0 0 1 11.5 151z" fill="#3a3a3a"/>
<!-- styles fx -->
<rect x="12" y="161.5" width="10" height="9.5" fill="#d8d8d8"/>
<path d="M15 166.5Q13 166 12.5 168L10.5 176.5Q10 178 8.5 177.5M10.5 170.5H14" fill="none" stroke="#535353" stroke-width="2.4"/>
<path d="M15 166.5Q13 166 12.5 168L10.5 176.5Q10 178 8.5 177.5M10.5 170.5H14" fill="none" stroke="#ececec" stroke-width="1.1"/>
<path d="M14.5 171L19 176.5M19.5 171L14 176.5" stroke="#535353" stroke-width="2.4"/>
<path d="M14.5 171L19 176.5M19.5 171L14 176.5" stroke="#ececec" stroke-width="1.1"/>
<!-- brush presets -->
<path d="M8.5 197.5Q9 192 12.5 189.5L14 197.5zM14.5 197.5L15.5 188.5L16.5 197.5zM17 197.5L18.5 189.5Q22 192 22.5 197.5z" fill="#dcdcdc"/>
</svg>
<!-- ===== LAYERS PANEL ===== -->
<div class="a" style="left:811px;top:244px;width:189px;height:269px;background:#474747;border-left:1px solid #3a3a3a"></div>
<div class="a" style="left:811px;top:244px;width:189px;height:10px;background:#353535;border-radius:3px 0 0 0"></div>
<div class="a" style="left:811px;top:254px;width:189px;height:12px;background:#383838"></div>
<div class="a" style="left:812px;top:254px;width:43px;height:12px;background:#424242"></div>
<div class="a" style="left:856px;top:254px;width:47px;height:12px;background:#424242"></div>
<div class="a" style="left:933px;top:254px;width:40px;height:12px;background:#424242"></div>
<div class="a" style="left:903px;top:254px;width:30px;height:12px;background:#535353"></div>
<div class="t o" style="left:816px;top:256px;color:#b8b8b8">Свойства</div>
<div class="t o" style="left:861px;top:256px;color:#b8b8b8">Операции</div>
<div class="t o" style="left:908px;top:256px;color:#f0f0f0">Слои</div>
<div class="t o" style="left:938px;top:256px;color:#b8b8b8">История</div>
<div class="a" style="left:812px;top:266px;width:188px;height:61px;background:#535353"></div>
<div class="a box" style="left:815px;top:269px;width:68px;height:15px"></div>
<svg class="a" style="left:819px;top:272px" width="9" height="9"><circle cx="5" cy="3.8" r="2.7" fill="none" stroke="#e0e0e0" stroke-width="1.2"/><path d="M3 5.8L0.8 8" stroke="#e0e0e0" stroke-width="1.4"/></svg>
<div class="t o" style="left:830px;top:273px;color:#ececec">Вид</div>
<svg class="a" style="left:876px;top:273px" width="6" height="8"><path d="M0 3L2.5 0.5L5 3zM0 5L2.5 7.5L5 5z" fill="#e0e0e0"/></svg>
<svg class="a" style="left:925px;top:270px" width="75" height="14">
<rect x="2.5" y="2.5" width="9" height="8" fill="#6a6a6a" stroke="#cfcfcf"/><path d="M4 9.5L6.5 6.5L8 8L9 7L10.5 9.5z" fill="#e0e0e0"/><circle cx="9" cy="4.8" r="0.9" fill="#e0e0e0"/>
<circle cx="24" cy="6.3" r="4" fill="#d8d8d8"/><path d="M26.5 3.5L21 9" stroke="#555" stroke-width="1.2"/>
<path d="M37 2.5H45.5V5H44.8L44.3 3.6H42.2V9.8L43.3 10.2V11H39.2V10.2L40.3 9.8V3.6H38.2L37.7 5H37z" fill="#d8d8d8"/>
<rect x="56" y="3" width="7" height="7" fill="none" stroke="#d8d8d8"/><g fill="#e0e0e0"><rect x="54.5" y="1.5" width="2" height="2"/><rect x="62.5" y="1.5" width="2" height="2"/><rect x="54.5" y="9.5" width="2" height="2"/><rect x="62.5" y="9.5" width="2" height="2"/></g>
<rect x="72" y="6" width="4" height="5" fill="#cfcfcf"/>
</svg>
<div class="a" style="left:812px;top:286px;width:188px;height:1px;background:#3c3c3c"></div>
<div class="a box" style="left:815px;top:290px;width:136px;height:14px"></div>
<div class="t o" style="left:819px;top:293px;color:#e8e8e8">Обычные</div>
<svg class="a" style="left:943px;top:293px" width="6" height="8"><path d="M0 3L2.5 0.5L5 3zM0 5L2.5 7.5L5 5z" fill="#e0e0e0"/></svg>
<div class="t o" style="left:955px;top:293px;color:#e0e0e0">Непрозрачность:</div>
<div class="a" style="left:812px;top:306px;width:188px;height:1px;background:#3c3c3c"></div>
<div class="t o" style="left:816px;top:314px;color:#dcdcdc">Закрепить:</div>
<svg class="a" style="left:858px;top:311px" width="62" height="14">
<g fill="#777"><rect x="2" y="2" width="9" height="9" fill="#8a8a8a"/><rect x="2" y="2" width="3" height="3" fill="#b0b0b0"/><rect x="8" y="2" width="3" height="3" fill="#b0b0b0"/><rect x="5" y="5" width="3" height="3" fill="#b0b0b0"/><rect x="2" y="8" width="3" height="3" fill="#b0b0b0"/><rect x="8" y="8" width="3" height="3" fill="#b0b0b0"/></g>
<path d="M27 2L20 9" stroke="#9a9a9a" stroke-width="1.2"/><path d="M16.5 12Q19 12 20.5 9.5L19.5 8.5Q18 10.5 16.5 12z" fill="#aaa"/>
<path d="M38 1V12M32.5 6.5H43.5" stroke="#e0e0e0" stroke-width="1.2"/><path d="M38 0L36 2.5H40zM38 13L36 10.5H40zM31.5 6.5L34 4.5V8.5zM44.5 6.5L42 4.5V8.5z" fill="#e0e0e0"/>
<path d="M52.5 6V4.5A2.5 2.5 0 0 1 57.5 4.5V6" fill="none" stroke="#dcdcdc" stroke-width="1.3"/><rect x="51" y="6" width="8" height="6" fill="#dcdcdc"/><rect x="54.5" y="8" width="1" height="2" fill="#555"/>
</svg>
<div class="t o" style="left:984px;top:314px;color:#e0e0e0">Заливка:</div>
<div class="a" style="left:812px;top:326px;width:188px;height:1px;background:#3c3c3c"></div>
<!-- layer rows -->
<div class="a" style="left:812px;top:327px;width:188px;height:87px;background:#535353"></div>
<div class="a" style="left:833px;top:328px;width:167px;height:29px;background:#6c7f98"></div>
<div class="a" style="left:833px;top:327px;width:1px;height:87px;background:#3e3e3e"></div>
<div class="a" style="left:812px;top:357px;width:188px;height:1px;background:#3c3c3c"></div>
<div class="a" style="left:812px;top:385px;width:188px;height:1px;background:#3c3c3c"></div>
<div class="a" style="left:812px;top:413px;width:188px;height:1px;background:#3a3a3a"></div>
<svg class="a" style="left:817px;top:340px" width="11" height="64">
<g><path d="M0.5 3Q5 -1.5 9.5 3Q5 7.5 0.5 3z" fill="#c8c8c8"/><circle cx="5" cy="3.2" r="1.5" fill="#3e3e3e"/></g>
<g transform="translate(0 29)"><path d="M0.5 3Q5 -1.5 9.5 3Q5 7.5 0.5 3z" fill="#c8c8c8"/><circle cx="5" cy="3.2" r="1.5" fill="#3e3e3e"/></g>
<g transform="translate(0 56.5)"><path d="M0.5 3Q5 -1.5 9.5 3Q5 7.5 0.5 3z" fill="#c8c8c8"/><circle cx="5" cy="3.2" r="1.5" fill="#3e3e3e"/></g>
</svg>
<!-- shape thumbs -->
<svg class="a" style="left:833px;top:335px" width="18" height="18">
<path d="M1.5 5V1.5H5M12 1.5H15.5V5M15.5 12V15.5H12M5 15.5H1.5V12" fill="none" stroke="#eaeaea" stroke-width="1.1"/>
<rect x="5" y="5.5" width="8.5" height="8.5" fill="none" stroke="#b8c0cc" stroke-width="0.9"/>
<g fill="#e8e8e8"><rect x="4" y="4.5" width="2" height="2"/><rect x="12.5" y="4.5" width="2" height="2"/><rect x="4" y="13" width="2" height="2"/><rect x="12.5" y="13" width="2" height="2"/></g>
<path d="M3.5 7V4H14Q15 4 15 5" fill="none" stroke="#141414" stroke-width="1.4"/>
<rect x="2.8" y="7" width="1.6" height="7" fill="#141414"/>
</svg>
<svg class="a" style="left:835px;top:365px" width="14" height="14">
<rect x="3.5" y="3.5" width="8" height="8" fill="none" stroke="#c8c8c8" stroke-width="0.9"/>
<g fill="#e0e0e0"><rect x="2.5" y="2.5" width="2" height="2"/><rect x="10.5" y="2.5" width="2" height="2"/><rect x="2.5" y="10.5" width="2" height="2"/><rect x="10.5" y="10.5" width="2" height="2"/></g>
<path d="M1.5 5V1.8H12.5V3" fill="none" stroke="#141414" stroke-width="1.2"/>
<rect x="0.8" y="5.5" width="1.6" height="5" fill="#141414"/>
</svg>
<div class="t o" style="left:855px;top:340px;color:#f0f0f0">Фигура 2</div>
<div class="t o" style="left:855px;top:368px;color:#e6e6e6">Фигура 1</div>
<!-- background thumb -->
<div class="a" style="left:836px;top:388px;width:24px;height:24px;background:#2c2c2c"></div>
<div class="a" style="left:837px;top:389px;width:22px;height:22px;background:#12c566;border:1px solid #9ad8a8"></div>
<div class="a" style="left:839px;top:393px;width:18px;height:7px;background:#efa10c"></div>
<div class="a" style="left:839px;top:400px;width:17px;height:8px;background:#b85a08"></div>
<div class="a" style="left:845px;top:391px;width:7px;height:2px;background:#7a3a10"></div>
<div class="t o" style="left:867px;top:396px;color:#e6e6e6">Фон</div>
</body></html>
